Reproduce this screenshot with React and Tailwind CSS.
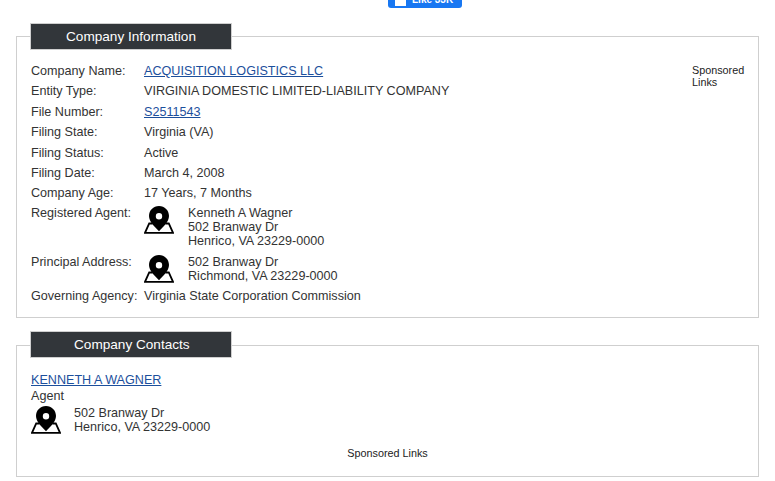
import React from 'react';

const link = 'text-[#1c4f9c] underline';

const PinIcon = () => (
  <svg width="30" height="28" viewBox="0 0 30 28" className="shrink-0">
    <path d="M8.5 17.500H5.2L1 26.800h28l-4.200-9.300H21.500" fill="none" stroke="#000" strokeWidth="1.800" />
    <path
      fillRule="evenodd"
      d="M15 0C9.300 0 5 4.400 5 9.900c0 5.700 5.800 10.900 10 15.300 4.200-4.400 10-9.600 10-15.300C25 4.400 20.700 0 15 0zm0 7a3.200 3.200 0 1 1 0 6.400A3.200 3.200 0 0 1 15 7z"
      fill="#000"
    />
  </svg>
);

const Address = ({ lines, className = '', textClass = 'ml-[14px]' }) => (
  <div className={`flex ${className}`}>
    <PinIcon />
    <div className={textClass}>
      {lines.map((line) => (
        <div key={line}>{line}</div>
      ))}
    </div>
  </div>
);

const SectionBox = ({ title, titleClass, tabClass = '-mt-[14px]', className, children }) => (
  <section className={`mx-4 border border-[#cfcfcf] ${className}`}>
    <div className={`${tabClass} ml-[13px] flex h-[27px] w-[202px] items-center border border-[#cfcfcf] bg-[#32363a] text-[13.600px] text-white`}>
      <span className={titleClass}>{title}</span>
    </div>
    {children}
  </section>
);

const Row = ({ label, className = 'h-[20.400px]', children }) => (
  <div className={`flex ${className}`}>
    <div className="w-[113px] shrink-0 whitespace-nowrap">{label}</div>
    <div className="whitespace-nowrap">{children}</div>
  </div>
);

export default function App() {
  return (
    <div className="h-[481px] w-[775px] overflow-hidden bg-white font-['Liberation_Sans',Arial,sans-serif] text-[12.600px] leading-[14px] text-[#333]">
      {/* Clipped like button */}
      <div className="flex h-9 justify-center">
        <div className="ml-[75px] -mt-[12px] flex h-[20px] w-[74px] items-center gap-[6px] rounded-[3px] bg-[#1877f2] pl-[7px] pt-[4px] text-[10px] font-bold text-white">
          <span className="h-[11px] w-[11px] bg-white" />
          Like 33K
        </div>
      </div>

      <SectionBox title="Company Information" titleClass="ml-[35px]" className="h-[282px]">
        <div className="relative px-[14px] pt-[14px]">
          <div className="absolute right-[12px] top-[14px] w-[54px] text-[10.800px] leading-[12px] text-[#222]">
            Sponsored Links
          </div>
          <Row label="Company Name:">
            <a href="#" className={link}>ACQUISITION LOGISTICS LLC</a>
          </Row>
          <Row label="Entity Type:">VIRGINIA DOMESTIC LIMITED-LIABILITY COMPANY</Row>
          <Row label="File Number:">
            <a href="#" className={link}>S2511543</a>
          </Row>
          <Row label="Filing State:">Virginia (VA)</Row>
          <Row label="Filing Status:">Active</Row>
          <Row label="Filing Date:">March 4, 2008</Row>
          <Row label="Company Age:" className="h-[20px]">17 Years, 7 Months</Row>
          <Row label="Registered Agent:" className="h-[49px]">
            <Address lines={['Kenneth A Wagner', '502 Branway Dr', 'Henrico, VA 23229-0000']} />
          </Row>
          <Row label="Principal Address:" className="h-[34px]">
            <Address lines={['502 Branway Dr', 'Richmond, VA 23229-0000']} />
          </Row>
          <Row label="Governing Agency:">Virginia State Corporation Commission</Row>
        </div>
      </SectionBox>

      <SectionBox title="Company Contacts" titleClass="ml-[43px]" tabClass="-mt-[15px]" className="mt-[27px] h-[132px]">
        <div className="px-[14px] pt-[15px]">
          <a href="#" className={link}>KENNETH A WAGNER</a>
          <div className="mt-[2px]">Agent</div>
          <Address className="mt-[3px]" textClass="ml-[13px]" lines={['502 Branway Dr', 'Henrico, VA 23229-0000']} />
          <div className="mt-[13px] text-center text-[10.800px] leading-[12px] text-[#222]">Sponsored Links</div>
        </div>
      </SectionBox>
    </div>
  );
}
